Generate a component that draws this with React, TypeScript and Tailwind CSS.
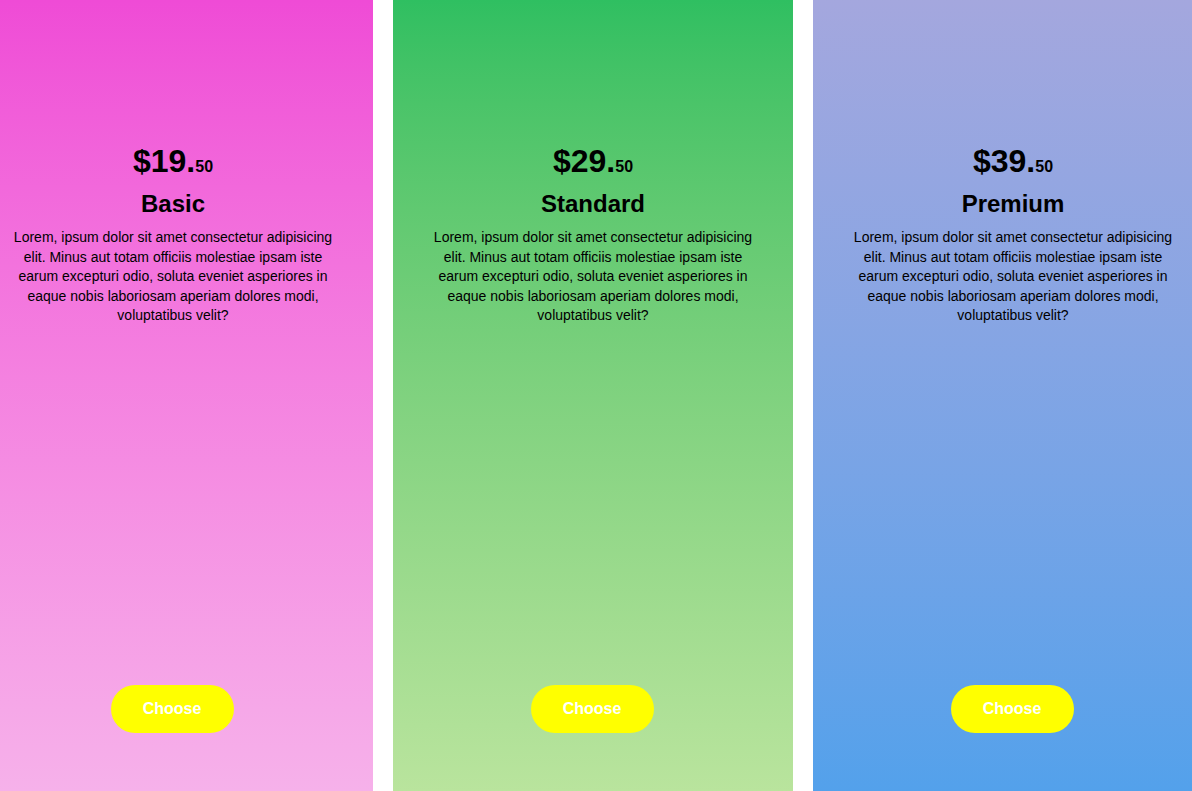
const plans = [
  { price: '19', name: 'Basic', bg: 'bg-gradient-to-b from-[#ef4bd6] to-[#f6b1ea]' },
  { price: '29', name: 'Standard', bg: 'bg-gradient-to-b from-[#2fbf61] to-[#b9e49d]' },
  { price: '39', name: 'Premium', bg: 'bg-gradient-to-b from-[#a4a7de] to-[#53a1eb]' },
];

const text =
  'Lorem, ipsum dolor sit amet consectetur adipisicing elit. Minus aut totam officiis molestiae ipsam iste earum excepturi odio, soluta eveniet asperiores in eaque nobis laboriosam aperiam dolores modi, voluptatibus velit?';

function PlanCard({ price, name, bg }: { price: string; name: string; bg: string }) {
  return (
    <div className={`${bg} w-[400px] shrink-0 h-[791px] flex flex-col items-center px-10 pt-[143px] pb-[58px] text-black`}>
      <h1 className="text-[32px] font-bold leading-[37px]">
        ${price}.<span className="text-[16px]">50</span>
      </h1>
      <h2 className="text-[24px] font-bold leading-[28px] mt-[5px]">{name}</h2>
      <p className="text-[14px] leading-[19.5px] text-center mt-[10px]">{text}</p>
      <button className="mt-auto mr-[2px] w-[123px] h-[48px] rounded-full bg-[#ffff00] text-white font-bold text-[16px]">
        Choose
      </button>
    </div>
  );
}

export default function App() {
  return (
    <div className="w-[1192px] h-[791px] overflow-hidden bg-white font-['Liberation_Sans',Arial,sans-serif]">
      <div className="w-[1186px] flex justify-center gap-5">
        {plans.map((p) => (
          <PlanCard key={p.name} {...p} />
        ))}
      </div>
    </div>
  );
}
